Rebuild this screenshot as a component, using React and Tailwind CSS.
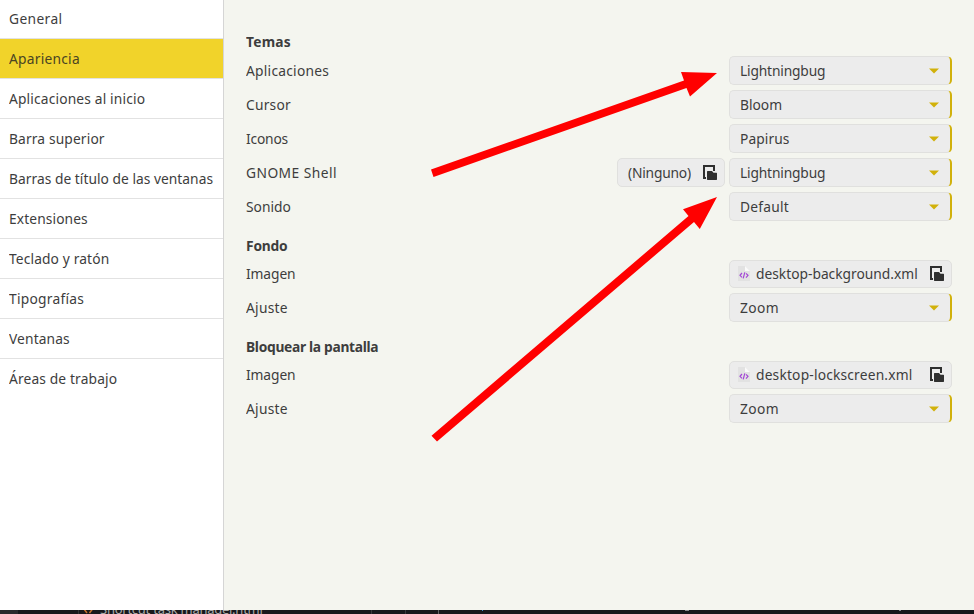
const NAV = [
  ['General', 'tracking-[0.4px]'],
  ['Apariencia', 'tracking-[0.26px]'],
  ['Aplicaciones al inicio', 'tracking-[0.17px]'],
  ['Barra superior', 'tracking-[0.15px]'],
  ['Barras de título de las ventanas', 'tracking-[0.03px]'],
  ['Extensiones', 'tracking-[0.12px]'],
  ['Teclado y ratón', 'tracking-[0.14px]'],
  ['Tipografías', 'tracking-[0.28px]'],
  ['Ventanas', 'tracking-[0.13px]'],
  ['Áreas de trabajo', 'tracking-[0.15px]'],
];

// Letter spacing for labels whose natural width differs from the toolkit's
const TRACKING = {
  Aplicaciones: 'tracking-[0.27px]',
  Cursor: 'tracking-[0.25px]',
  Iconos: 'tracking-[-0.2px]',
  'GNOME Shell': 'tracking-[0.48px]',
  Imagen: 'tracking-[-0.1px]',
  Ajuste: 'tracking-[0.3px]',
  Temas: 'tracking-[0.25px]',
  Fondo: 'tracking-[-0.2px]',
  'Bloquear la pantalla': 'tracking-[-0.32px]',
  Lightningbug: 'tracking-[-0.17px]',
  Papirus: 'tracking-[0.1px]',
  Default: 'tracking-[0.25px]',
  Zoom: 'tracking-[0.4px]',
  'desktop-lockscreen.xml': 'tracking-[0.2px]',
  '(Ninguno)': 'tracking-[-0.2px]',
};

function Text({ children, className = '' }) {
  return (
    <span className={`mb-[2px] inline-block origin-left scale-x-[0.94] whitespace-nowrap ${TRACKING[children] || ''} ${className}`}>
      {children}
    </span>
  );
}

function OpenIcon() {
  return (
    <svg className="block shrink-0" width="14" height="15" viewBox="0 0 14 15">
      <path fill="#2f2f2f" d="M0 0h12v6h-2V2H2v10h1v2H0z" />
      <path fill="#2f2f2f" d="M4.500 6H9l1.500 1.700H13.500l.5.500V14.500l-.5.500H4.500L4 14.500V6.500z" />
    </svg>
  );
}

function XmlIcon() {
  return (
    <svg className="block shrink-0" width="12" height="15" viewBox="0 0 12 15">
      <path fill="#e2e2e2" d="M0 0h7l5 5v10H0z" />
      <path fill="#fafafa" d="M7 0l5 5H7z" />
      <path fill="none" stroke="#a347d6" strokeWidth="1.200" d="M4 7L2 9.300l2 2M8 7.300l2 2-2 2.300M6.800 6.300L5.200 12.300" />
    </svg>
  );
}

function Select({ value }) {
  return (
    <div className="flex h-[29px] w-[223px] items-center justify-between rounded-[5px] border border-r-2 border-[#e0e0de] border-r-[#d1b10b] bg-[#ececec] pl-[10px] pr-[11px]">
      <Text>{value}</Text>
      <svg className="block" width="10" height="6" viewBox="0 0 10 6">
        <path fill="#d1b10b" d="M0 .5h10L5 5.500z" />
      </svg>
    </div>
  );
}

function FileButton({ value }) {
  return (
    <div className="flex h-7 w-[223px] items-center rounded-[5px] border border-[#e0e0de] bg-[#ececec] pl-2 pr-[7px]">
      <div className="mb-px"><XmlIcon /></div>
      <Text className="ml-[6px]">{value}</Text>
      <div className="mb-px ml-auto"><OpenIcon /></div>
    </div>
  );
}

function Row({ label, children }) {
  return (
    <div className="flex items-center justify-between">
      <Text>{label}</Text>
      <div className="flex gap-1">{children}</div>
    </div>
  );
}

function Section({ title, children, className = '' }) {
  return (
    <section className={className}>
      <h2 className="flex h-5 items-center font-bold leading-5"><Text>{title}</Text></h2>
      <div className="mt-[4px] flex flex-col gap-[5px]">{children}</div>
    </section>
  );
}

export default function App() {
  return (
    <div className="relative flex h-[614px] w-[974px] flex-col overflow-hidden bg-[#18181c] font-['Noto_Sans','Open_Sans',sans-serif] text-[14.67px] leading-5 text-[#3d3d3d]">
      <div className="flex h-[610px] shrink-0">
        <nav className="w-[224px] shrink-0 border-r border-[#d5d5d5] bg-white">
          {NAV.map(([label, tracking], i) => (
            <div
              key={label}
              className={`flex items-center pl-[9px] ${i === 0 ? 'h-[39px]' : 'h-10'} ${i < 9 ? 'border-b border-[#e2e2e2]' : ''} ${i === 1 ? 'bg-[#f1d32a] text-[#4a4423]' : ''}`}
            >
              <Text className={tracking}>{label}</Text>
            </div>
          ))}
        </nav>
        <main className="flex-1 bg-[#f4f5ef] pl-[22px] pr-[22px] pt-8">
          <Section title="Temas">
            <Row label="Aplicaciones"><Select value="Lightningbug" /></Row>
            <Row label="Cursor"><Select value="Bloom" /></Row>
            <Row label="Iconos"><Select value="Papirus" /></Row>
            <Row label="GNOME Shell">
              <div className="flex h-[29px] w-[108px] items-center justify-between rounded-[5px] border border-[#e0e0de] bg-[#ececec] pl-[10px] pr-[7px]">
                <Text>(Ninguno)</Text>
                <OpenIcon />
              </div>
              <Select value="Lightningbug" />
            </Row>
            <Row label="Sonido"><Select value="Default" /></Row>
          </Section>
          <Section title="Fondo" className="mt-[15px]">
            <Row label="Imagen"><FileButton value="desktop-background.xml" /></Row>
            <Row label="Ajuste"><Select value="Zoom" /></Row>
          </Section>
          <Section title="Bloquear la pantalla" className="mt-[15px]">
            <Row label="Imagen"><FileButton value="desktop-lockscreen.xml" /></Row>
            <Row label="Ajuste"><Select value="Zoom" /></Row>
          </Section>
        </main>
      </div>
      {/* Sliver of the editor window behind the dialog */}
      <div className="flex h-1 overflow-hidden text-[#a8a8a8]">
        <div className="h-1 w-[18px] bg-[#29292c]" />
        <div className="ml-[60px] h-1 w-px bg-[#333337]" />
        <svg className="ml-1 block" width="10" height="4" viewBox="0 0 10 4">
          <path fill="none" stroke="#c8702c" strokeWidth="1.500" d="M1 -1L4 3M9.500 -1L6.500 3" />
        </svg>
        <span className="-mt-[11px] ml-[7px] w-[162px] whitespace-nowrap text-[13px] leading-5 tracking-[-0.25px]">Shortcut task manager.html</span>
        <div className="ml-[109px] h-1 w-px bg-[#38383c]" />
        <div className="ml-[33px] h-1 w-px bg-[#38383c]" />
        <div className="ml-[32px] h-1 w-px bg-[#626266]" />
        <div className="ml-[43px] h-px w-px bg-[#3c8fd0]" />
        <div className="ml-[202px] h-px w-1 bg-[#88888c]" />
        <div className="ml-[210px] h-px w-[2px] bg-[#88888c]" />
      </div>
      <svg className="pointer-events-none absolute inset-0" width="974" height="614" viewBox="0 0 974 614">
        <path fill="#ff0000" d="M431 169.500L684 80.500L681 72L717 73L690 96.500L686.500 88L433.500 177z" />
        <path fill="#ff0000" d="M431.500 435.700L688.500 216L683 209.300L717 197L699.800 229L694 222L437 441.500z" />
      </svg>
    </div>
  );
}
